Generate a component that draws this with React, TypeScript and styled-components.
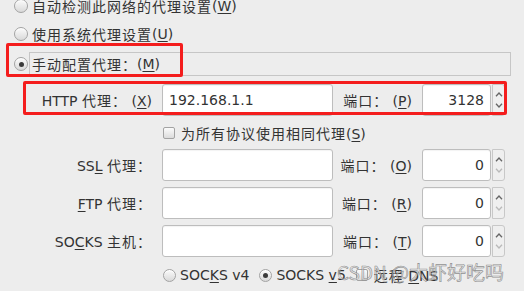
import styled, { createGlobalStyle } from "styled-components";

const GlobalStyle = createGlobalStyle`
  html, body {
    margin: 0;
    padding: 0;
    background: #ededed;
    overflow: hidden;
  }
  body {
    font-family: "DejaVu Sans", "Noto Sans CJK SC", sans-serif;
    font-size: 14px;
    color: #333;
  }
`;

type SpinProps = { value: string; canDown?: boolean };

function Chevron({ up, dim }: { up?: boolean; dim?: boolean }) {
  return (
    <svg width="8" height="5" viewBox="0 0 8 5">
      <polyline
        points={up ? "1,4.2 4,1 7,4.2" : "1,0.8 4,4 7,0.8"}
        fill="none"
        stroke={dim ? "#b9b9b9" : "#666"}
        strokeWidth="1.3"
      />
    </svg>
  );
}

function SpinBox({ value, canDown }: SpinProps) {
  return (
    <Spin>
      <Entry $align="right">{value}</Entry>
      <Arrows>
        <Chevron up />
        <Chevron dim={!canDown} />
      </Arrows>
    </Spin>
  );
}

function App() {
  return (
    <Wrapper>
      <GlobalStyle />
      <Page>
        <OptionRow>
          <Radio />
          <OptionLabel>
            <Han>自动检测此网络的代理设置</Han>(<Key>W</Key>)
          </OptionLabel>
        </OptionRow>
        <OptionRow>
          <Radio />
          <OptionLabel>
            <Han>使用系统代理设置</Han>(<Key>U</Key>)
          </OptionLabel>
        </OptionRow>
        <OptionRow $gap>
          <Radio $checked />
          <OptionLabel $framed>
            <Han>手动配置代理：</Han>(<Key>M</Key>)
          </OptionLabel>
        </OptionRow>

        <ProxyGrid>
          <FieldLabel>
            HTTP <Han>代理：</Han> (<Key>X</Key>)
          </FieldLabel>
          <Entry>192.168.1.1</Entry>
          <FieldLabel>
            <Han>端口：</Han> (<Key>P</Key>)
          </FieldLabel>
          <SpinBox value="3128" canDown />

          <CheckRow>
            <Checkbox />
            <span>
              <Han>为所有协议使用相同代理</Han>(<Key>S</Key>)
            </span>
          </CheckRow>

          <FieldLabel>
            SS<Key>L</Key> <Han>代理：</Han>
          </FieldLabel>
          <Entry />
          <FieldLabel>
            <Han>端口：</Han> (<Key>O</Key>)
          </FieldLabel>
          <SpinBox value="0" />

          <FieldLabel>
            <Key>F</Key>TP <Han>代理：</Han>
          </FieldLabel>
          <Entry />
          <FieldLabel>
            <Han>端口：</Han> (<Key>R</Key>)
          </FieldLabel>
          <SpinBox value="0" />

          <FieldLabel>
            SO<Key>C</Key>KS <Han>主机：</Han>
          </FieldLabel>
          <Entry />
          <FieldLabel>
            <Han>端口：</Han> (<Key>T</Key>)
          </FieldLabel>
          <SpinBox value="0" />

          <VersionRow>
            <Choice>
              <Radio $small />
              <span>
                SOC<Key>K</Key>S v4
              </span>
            </Choice>
            <Choice>
              <Radio $small $checked />
              <span>
                SOCKS <Key>v</Key>5
              </span>
            </Choice>
            <Choice $wide>
              <Checkbox />
              <span>
                <Han>远程</Han> <Key>D</Key>NS
              </span>
            </Choice>
          </VersionRow>
        </ProxyGrid>
      </Page>

      <RedMark $left={6} $top={43} $width={177} $height={34} />
      <RedMark $left={23} $top={81} $width={484} $height={34} />
      <Watermark>CSDN @大虾好吃吗</Watermark>
    </Wrapper>
  );
}

const Wrapper = styled.div`
  position: relative;
  width: 524px;
  height: 291px;
  overflow: hidden;
`;

const Page = styled.div`
  margin-top: -8px;
`;

const OptionRow = styled.div<{ $gap?: boolean }>`
  display: flex;
  align-items: center;
  gap: 1px;
  height: 28px;
  padding: 0 13px 0 14px;
  margin-top: ${(p) => (p.$gap ? "2px" : "0")};
`;

const Radio = styled.span<{ $checked?: boolean; $small?: boolean }>`
  position: relative;
  flex: none;
  box-sizing: border-box;
  width: ${(p) => (p.$small ? "13px" : "14px")};
  height: ${(p) => (p.$small ? "13px" : "14px")};
  border-radius: 50%;
  border: 1px solid #a3a3a3;
  background: linear-gradient(#fbfbfb, #d9d9d9);
  box-shadow: inset 0 1px 0 #fff;
  &::after {
    content: "";
    display: ${(p) => (p.$checked ? "block" : "none")};
    position: absolute;
    left: 50%;
    top: 50%;
    width: 5px;
    height: 5px;
    margin: -2.5px 0 0 -2.5px;
    border-radius: 50%;
    background: #3a3a3a;
  }
`;

const OptionLabel = styled.span<{ $framed?: boolean }>`
  display: flex;
  align-items: center;
  box-sizing: border-box;
  height: 24px;
  padding: 0 2px;
  border: 1px solid ${(p) => (p.$framed ? "#c6c6c6" : "transparent")};
  flex: ${(p) => (p.$framed ? "1" : "none")};
  white-space: nowrap;
`;

const Han = styled.span`
  letter-spacing: 1px;
`;

const Key = styled.span`
  text-decoration: underline;
  text-underline-offset: 2px;
`;

const ProxyGrid = styled.div`
  display: grid;
  grid-template-columns: 128px 171px 69px 83px;
  grid-template-rows: 32px 21px 32px 32px 32px 24px;
  column-gap: 10px;
  row-gap: 6px;
  margin: 6px 0 0 24px;
`;

const FieldLabel = styled.span`
  justify-self: end;
  align-self: center;
  white-space: nowrap;
`;

const Entry = styled.div<{ $align?: "left" | "right" }>`
  display: flex;
  align-items: center;
  justify-content: ${(p) => (p.$align === "right" ? "flex-end" : "flex-start")};
  box-sizing: border-box;
  height: 100%;
  padding: 0 6px;
  background: #fff;
  border: 1px solid #bdbdbd;
  border-radius: 3px;
  box-shadow: inset 0 1px 1px rgba(0, 0, 0, 0.05);
  color: #333;
`;

const Spin = styled.div`
  display: grid;
  grid-template-columns: 69px 13px;
  column-gap: 1px;
`;

const Arrows = styled.div`
  display: flex;
  flex-direction: column;
  align-items: center;
  justify-content: space-around;
  box-sizing: border-box;
  padding: 4px 0;
  border: 1px solid #c8c8c8;
  border-radius: 0 3px 3px 0;
  background: #efefef;
`;

const CheckRow = styled.div`
  grid-column: 2 / 5;
  display: flex;
  align-items: center;
  gap: 6px;
  padding-left: 1px;
  white-space: nowrap;
`;

const Checkbox = styled.span`
  flex: none;
  box-sizing: border-box;
  width: 12px;
  height: 12px;
  border: 1px solid #a3a3a3;
  border-radius: 2px;
  background: linear-gradient(#fbfbfb, #dcdcdc);
`;

const VersionRow = styled.div`
  grid-column: 2 / 5;
  display: flex;
  align-items: center;
  gap: 10px;
  padding-left: 1px;
  white-space: nowrap;
`;

const Choice = styled.div<{ $wide?: boolean }>`
  display: flex;
  align-items: center;
  gap: ${(p) => (p.$wide ? "6px" : "4px")};
`;

const RedMark = styled.div<{
  $left: number;
  $top: number;
  $width: number;
  $height: number;
}>`
  position: absolute;
  left: ${(p) => p.$left}px;
  top: ${(p) => p.$top}px;
  width: ${(p) => p.$width}px;
  height: ${(p) => p.$height}px;
  box-sizing: border-box;
  border: 3px solid #f41d1d;
  border-radius: 2px;
  pointer-events: none;
`;

const Watermark = styled.div`
  position: absolute;
  left: 337px;
  top: 262px;
  font-family: "Noto Sans CJK SC", "Noto Sans", sans-serif;
  font-size: 19px;
  line-height: 1;
  color: rgba(225, 225, 225, 0.55);
  -webkit-text-stroke: 0.6px rgba(110, 110, 110, 0.75);
  white-space: nowrap;
  pointer-events: none;
`;

export default App;
